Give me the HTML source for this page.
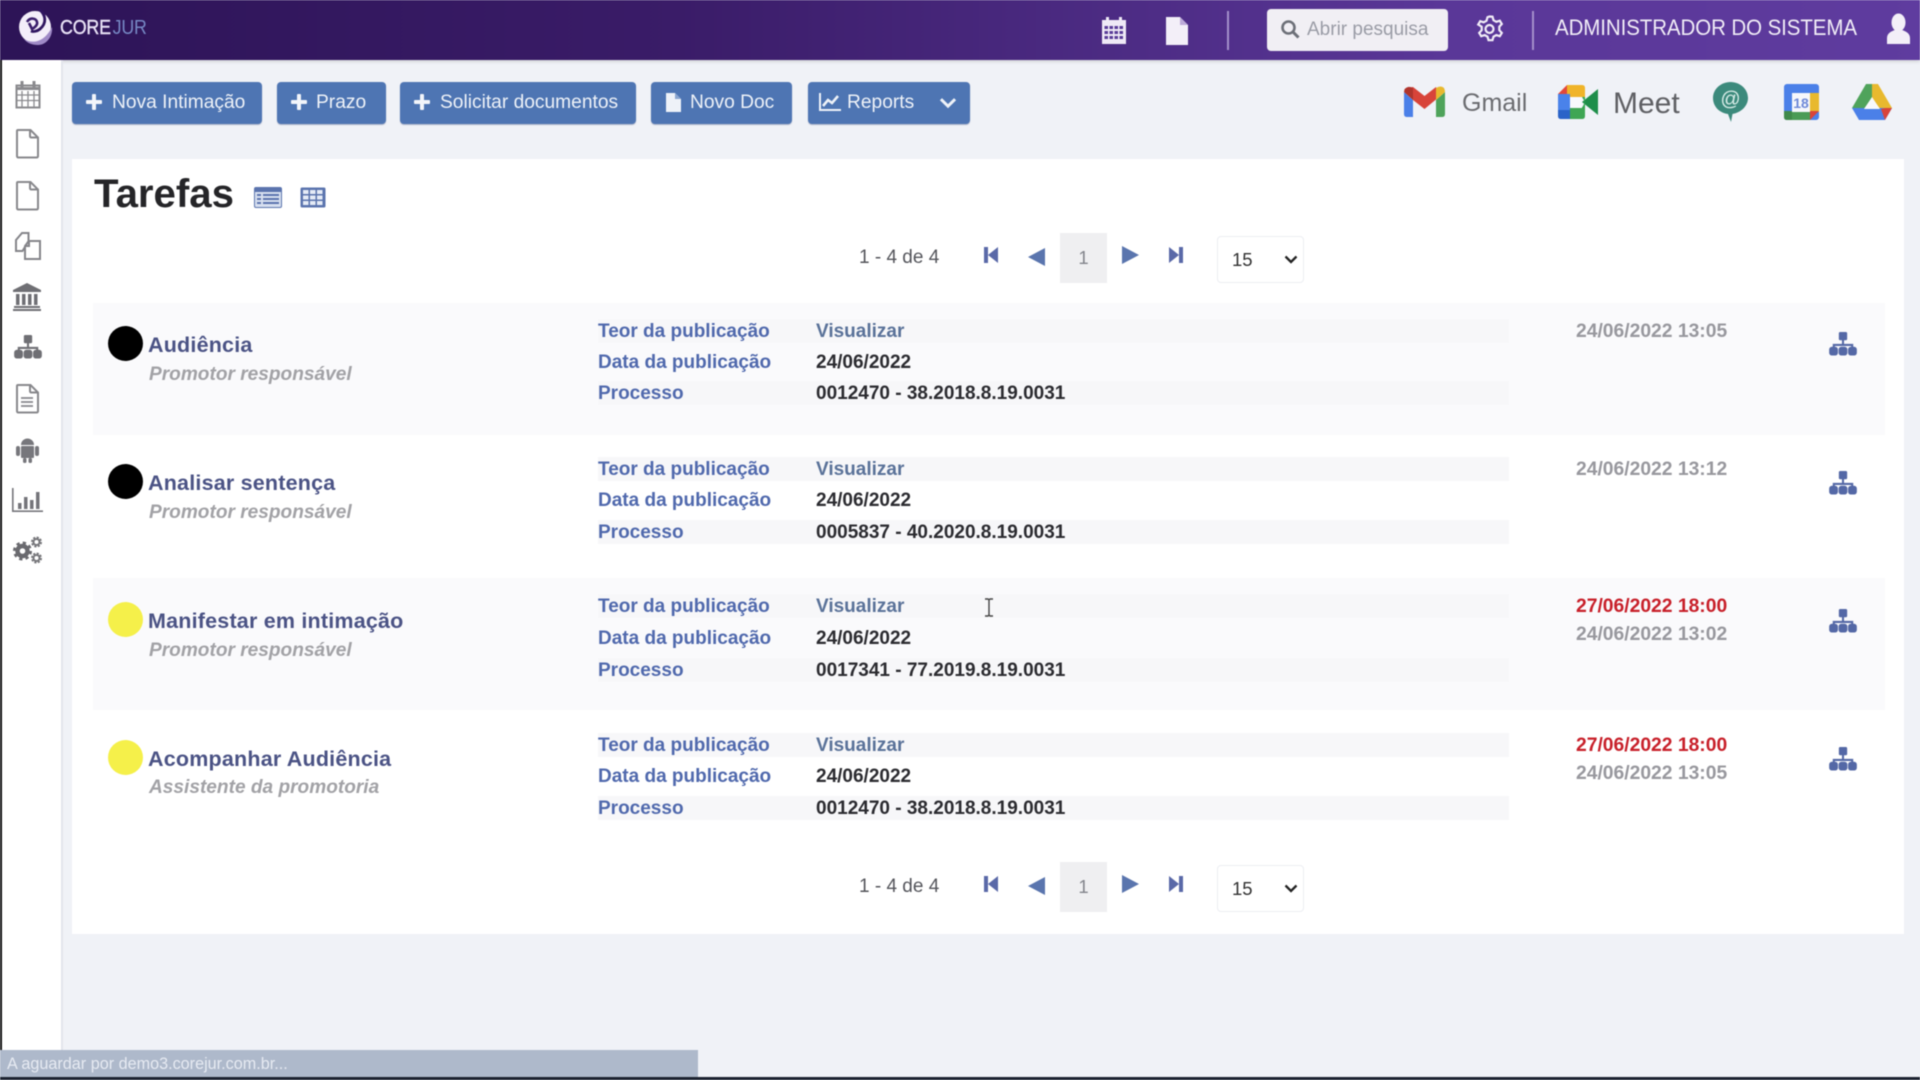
<!DOCTYPE html>
<html lang="pt"><head><meta charset="utf-8"><title>Tarefas</title>
<style>
*{box-sizing:border-box}
html,body{margin:0;padding:0;width:1920px;height:1080px;overflow:hidden}
body{background:#f0f2f7;font-family:"Liberation Sans",sans-serif;position:relative}
#w{position:absolute;left:0;top:0;width:1920px;height:1080px;filter:blur(.55px)}
.a{position:absolute;white-space:nowrap}
.hd{left:0;top:0;width:1920px;height:60px;background:linear-gradient(90deg,#2d1457 0%,#3a1c68 35%,#5a3798 75%,#5f3c9f 100%);box-shadow:0 1px 4px rgba(0,0,0,.18)}
.side{left:0;top:60px;width:63px;height:1017px;background:#fff;border-left:2px solid #111;border-right:2px solid #e3e5ec}
.btn{top:82px;height:42px;background:#4e75b3;border-radius:4px;color:#eef2f8;font-size:19.2px;line-height:42px;box-shadow:0 1px 1px rgba(40,60,110,.35)}
.btn span{position:absolute;top:0}
.plus{position:absolute;top:12px;width:16px;height:16px}
.plus:before,.plus:after{content:"";position:absolute;background:#f2f5fa;border-radius:1px}
.plus:before{left:6px;top:0;width:4px;height:16px}
.plus:after{left:0;top:6px;width:16px;height:4px}
.card{left:72px;top:159px;width:1832px;height:775px;background:#fff}
.row{left:93px;width:1792px;height:132px;background:#fafafc}
.st{left:598px;width:911px;height:24px;background:#f7f7f9}
.dot{left:108px;width:35px;height:35px;border-radius:50%}
.ti{left:148px;font-size:21.5px;font-weight:bold;color:#4b5385;line-height:26px;letter-spacing:.2px}
.su{left:149px;font-size:19.1px;font-weight:bold;font-style:italic;color:#a2a2a6;line-height:24px}
.l{left:598px;font-size:19px;font-weight:bold;color:#5069ad;line-height:24px;margin-top:2px}
.v{left:816px;font-size:19px;font-weight:bold;color:#2b2b30;line-height:24px;margin-top:2px}
.vl{color:#5a7299}
.d{left:1576px;font-size:19.3px;font-weight:bold;color:#98989e;line-height:24px;margin-top:2px}
.r{color:#c8202a}
.pg{font-size:19px;color:#55565c;line-height:24px;margin-top:1px}
.sel{width:87px;height:47px;background:#fff;border:1px solid #eceef2;border-radius:4px;font-size:18.5px;color:#333;line-height:46px;padding-left:14px}
.box{width:47px;height:50px;background:#efeff1;color:#83858c;font-size:18.5px;text-align:center;line-height:49px}
svg{position:absolute;overflow:visible}
</style></head><body>
<svg width="0" height="0" style="position:absolute">
<defs>
<symbol id="cal" viewBox="0 0 26 30"><path d="M1 5h4V2h3v3h10V2h3v3h4v24H1z" fill="currentColor"/><g fill="#5a3d98"><rect x="3.500" y="11" width="3.500" height="3"/><rect x="8.500" y="11" width="3.500" height="3"/><rect x="13.500" y="11" width="3.500" height="3"/><rect x="18.500" y="11" width="3.500" height="3"/><rect x="3.500" y="16" width="3.500" height="3"/><rect x="8.500" y="16" width="3.500" height="3"/><rect x="13.500" y="16" width="3.500" height="3"/><rect x="18.500" y="16" width="3.500" height="3"/><rect x="3.500" y="21" width="3.500" height="3"/><rect x="8.500" y="21" width="3.500" height="3"/><rect x="13.500" y="21" width="3.500" height="3"/><rect x="18.500" y="21" width="3.500" height="3"/></g></symbol>
<symbol id="doc" viewBox="0 0 24 30"><path d="M2 2q0-1 1-1h12.500L23 8.500V27q0 1.500-1.500 1.500h-18Q2 28.500 2 27z" fill="none" stroke="currentColor" stroke-width="2"/><path d="M15 1.500V7q0 1.500 1.500 1.500H22.500" fill="none" stroke="currentColor" stroke-width="2"/></symbol>
<symbol id="org" viewBox="0 0 30 26"><rect x="10.500" y="0" width="9" height="9" rx="1.500" fill="currentColor"/><path d="M15 8v7M5 18v-4h20v4" fill="none" stroke="currentColor" stroke-width="2.200"/><rect x="0" y="16" width="9.500" height="9.500" rx="3" fill="currentColor"/><rect x="10.250" y="16" width="9.500" height="9.500" rx="3" fill="currentColor"/><rect x="20.500" y="16" width="9.500" height="9.500" rx="3" fill="currentColor"/></symbol>
<symbol id="first" viewBox="0 0 16 18"><rect x="1" y="1" width="4" height="16" fill="currentColor"/><path d="M15 1v16L5 9z" fill="currentColor"/></symbol>
<symbol id="last" viewBox="0 0 16 18"><rect x="11" y="1" width="4" height="16" fill="currentColor"/><path d="M1 1v16l10-8z" fill="currentColor"/></symbol>
<symbol id="prev" viewBox="0 0 18 18"><path d="M17 0v18L0 9z" fill="currentColor"/></symbol>
<symbol id="next" viewBox="0 0 18 18"><path d="M1 0v18l17-9z" fill="currentColor"/></symbol>
<symbol id="chev" viewBox="0 0 14 9"><path d="M1.500 1.500L7 7l5.500-5.500" fill="none" stroke="currentColor" stroke-width="2.300"/></symbol>
</defs></svg>
<div id="w">
<div class="a hd"></div>
<!-- logo -->
<svg style="left:18px;top:9px" width="36" height="36" viewBox="0 0 36 36"><circle cx="17" cy="18" r="16" fill="#f3eef9"/><path d="M9 13c3-5 9-4 10 0 1 3-3 6-5 7l-3-6" fill="none" stroke="#3a1e6b" stroke-width="2.600"/><path d="M21 0c7 6 8 14 1 20-3 2.500-7 3-9 2" fill="none" stroke="#2f1560" stroke-width="2.800"/><path d="M6 30c8 5 20 4 28-12 1 10-6 18-14 18-6 0-11-2-14-6z" fill="#9f8ac6"/></svg>
<div class="a" style="left:60px;top:13px;color:#e8e1f5;font-size:20.5px;line-height:30px;transform:scaleX(.87);transform-origin:0 0;font-weight:bold;letter-spacing:-.2px"><span style="font-weight:normal;-webkit-text-stroke:.4px #e8e1f5">CORE</span><span style="font-weight:normal;color:#7688c4;margin-left:2px">JUR</span></div>
<!-- header right -->
<svg style="left:1101px;top:15px;color:#efe9f6" width="26" height="30"><use href="#cal"/></svg>
<svg style="left:1165px;top:16px" width="24" height="30" viewBox="0 0 24 30"><path d="M1 1h14l8 8v20H1z" fill="#f3eff8"/><path d="M15 1v8h8" fill="#bcaad8"/></svg>
<div class="a" style="left:1227px;top:11px;width:2px;height:39px;background:#a48fca"></div>
<div class="a" style="left:1267px;top:9px;width:181px;height:42px;background:#f1eff4;border-radius:4px"></div>
<svg style="left:1280px;top:19px" width="20" height="20" viewBox="0 0 20 20"><circle cx="8.500" cy="8.500" r="6" fill="none" stroke="#6d7078" stroke-width="2.600"/><path d="M13 13l5.500 5.500" stroke="#6d7078" stroke-width="3"/></svg>
<div class="a" style="left:1307px;top:18px;font-size:19px;line-height:24px;color:#9a9ca6">Abrir pesquisa</div>
<svg style="left:1475px;top:14px" width="29" height="30" viewBox="0 0 29 30"><path d="M14.500 2.500l3 .2 1 3.600 2.800 1.500 3.500-1.100 2 3.300-2.500 2.700v3.500l2.500 2.700-2 3.300-3.500-1.100-2.800 1.500-1 3.600h-4l-1-3.600-2.800-1.500-3.500 1.100-2-3.300 2.500-2.700v-3.500L3.200 10.500l2-3.300 3.500 1.100 2.800-1.500 1-3.600z" fill="none" stroke="#f1ecf7" stroke-width="2.200"/><circle cx="14.500" cy="15" r="4" fill="none" stroke="#f1ecf7" stroke-width="2.200"/></svg>
<div class="a" style="left:1532px;top:11px;width:2px;height:39px;background:#a48fca"></div>
<div class="a" style="left:1555px;top:14px;font-size:22px;line-height:28px;color:#f1edf7;letter-spacing:-.1px;transform:scaleX(.932);transform-origin:0 0">ADMINISTRADOR DO SISTEMA</div>
<svg style="left:1886px;top:13px" width="25" height="31" viewBox="0 0 25 31"><ellipse cx="12.500" cy="9.500" rx="7" ry="9" fill="#f3eff8"/><path d="M1 31v-6c0-5 5-7 8-8h7c3 1 8 3 8 8v6z" fill="#f3eff8"/></svg>
<!-- sidebar -->
<div class="a side"></div>
<svg style="left:15px;top:79px" width="26" height="30" viewBox="0 0 26 30" fill="none" stroke="#8a8a8e"><path d="M1.500 6.500h23v22h-23z" stroke-width="2"/><path d="M1.500 9.500h23" stroke-width="3"/><path d="M1.500 16h23M1.500 21.500h23M7 12v16M13 12v16M19 12v16" stroke-width="1.300"/><path d="M7 2v6M19 2v6" stroke-width="3"/></svg>
<svg style="left:15px;top:129px;color:#88888c" width="24" height="30"><use href="#doc"/></svg>
<svg style="left:15px;top:181px;color:#88888c" width="24" height="30"><use href="#doc"/></svg>
<svg style="left:14px;top:231px" width="28" height="30" viewBox="0 0 28 30" fill="none" stroke="#85858a" stroke-width="2"><path d="M2 9l6-7h6.500v8l-6 10H2z"/><path d="M15 10h11v18H11V15z" fill="#fff"/><path d="M15 10v5h-4"/></svg>
<svg style="left:12px;top:283px" width="30" height="28" viewBox="0 0 30 28" fill="#6f6f74"><path d="M15 0l14 7v2H1V7z"/><rect x="4" y="11" width="3.500" height="11"/><rect x="10" y="11" width="3.500" height="11"/><rect x="16" y="11" width="3.500" height="11"/><rect x="22" y="11" width="3.500" height="11"/><rect x="2" y="23" width="26" height="2"/><rect x="1" y="26" width="28" height="2"/></svg>
<svg style="left:14px;top:335px;color:#6f6f74" width="28" height="24"><use href="#org"/></svg>
<svg style="left:15px;top:384px;color:#88888c" width="24" height="30"><use href="#doc"/></svg>
<svg style="left:20px;top:397px" width="14" height="10" viewBox="0 0 14 10"><path d="M1 1h12M1 5h12M1 9h12" stroke="#88888c" stroke-width="1.800"/></svg>
<svg style="left:16px;top:437px" width="23" height="26" viewBox="0 0 23 26" fill="#77777c"><path d="M5 8a6.500 6.500 0 0 1 13 0z"/><rect x="5" y="9" width="13" height="12" rx="1"/><rect x="0" y="9" width="4" height="10" rx="2"/><rect x="19" y="9" width="4" height="10" rx="2"/><rect x="7" y="21" width="3.500" height="5" rx="1.500"/><rect x="12.500" y="21" width="3.500" height="5" rx="1.500"/></svg>
<svg style="left:12px;top:488px" width="31" height="24" viewBox="0 0 31 24" fill="#75757a"><rect x="0" y="0" width="1.600" height="24"/><rect x="0" y="22.400" width="31" height="1.600"/><rect x="6" y="15" width="3.500" height="6"/><rect x="12" y="9" width="3.500" height="12"/><rect x="18" y="12" width="3.500" height="9"/><rect x="24" y="4" width="3.500" height="17"/></svg>
<svg style="left:13px;top:537px" width="29" height="27" viewBox="0 0 29 27" fill="none"><circle cx="9.500" cy="14" r="5" stroke="#6a6a6f" stroke-width="4.400"/><circle cx="9.500" cy="14" r="8" stroke="#6a6a6f" stroke-width="3" stroke-dasharray="3.200 3.080"/><circle cx="23.500" cy="5" r="3" stroke="#78787c" stroke-width="2"/><circle cx="23.500" cy="5" r="4.500" stroke="#78787c" stroke-width="2" stroke-dasharray="2.200 1.330"/><circle cx="23.500" cy="21" r="3" stroke="#78787c" stroke-width="2"/><circle cx="23.500" cy="21" r="4.500" stroke="#78787c" stroke-width="2" stroke-dasharray="2.200 1.330"/></svg>
<!-- toolbar -->
<div class="a btn" style="left:72px;width:190px"><i class="plus" style="left:14px"></i><span style="left:40px">Nova Intimação</span></div>
<div class="a btn" style="left:277px;width:109px"><i class="plus" style="left:14px"></i><span style="left:39px">Prazo</span></div>
<div class="a btn" style="left:400px;width:236px"><i class="plus" style="left:14px"></i><span style="left:40px">Solicitar documentos</span></div>
<div class="a btn" style="left:651px;width:141px"><svg style="left:14px;top:11px" width="17" height="19" viewBox="0 0 17 19"><path d="M1 0h9l6 6v13H1z" fill="#eef2f8"/><path d="M10 0v6h6" fill="#8aa5d0"/></svg><span style="left:39px">Novo Doc</span></div>
<div class="a btn" style="left:808px;width:162px"><svg style="left:11px;top:11px" width="22" height="18" viewBox="0 0 22 18"><path d="M1 0v17h21" fill="none" stroke="#eef2f8" stroke-width="2"/><path d="M4 13l5-6 4 3 6-7" fill="none" stroke="#eef2f8" stroke-width="2.600"/></svg><span style="left:39px">Reports</span><svg style="left:131px;top:15px;color:#eef2f8" width="18" height="12"><use href="#chev"/></svg></div>
<!-- google apps -->
<svg style="left:1404px;top:87px" width="41" height="30" viewBox="0 0 41 30"><path d="M0 5v22q0 3 3 3h6V13z" fill="#4b80e8"/><path d="M32 13v17h6q3 0 3-3V5z" fill="#4fa35b"/><path d="M3 1L9 0l11.500 9L32 0l3 10-14.500 12L9 13z" fill="#d8443a"/><path d="M32 1q5-3 8 0 1 2 1 4l-9 8z" fill="#e8b92e"/><path d="M0 5q0-4 4-5 2-.5 5 1v12z" fill="#b0352d"/></svg>
<div class="a" style="left:1462px;top:87px;font-size:25px;line-height:32px;color:#6b6c70">Gmail</div>
<svg style="left:1558px;top:85px" width="40" height="34" viewBox="0 0 40 34"><path d="M9 0h15q3 0 3 3v9H12V9H9z" fill="#f0b429"/><path d="M0 9L9 0v9z" fill="#e2483b"/><path d="M0 9h12v16H0z" fill="#4a82ea"/><path d="M0 25h12v9H3q-3 0-3-3z" fill="#2a63c8"/><path d="M12 22h15v9q0 3-3 3H12z" fill="#3fa654"/><rect x="12" y="12" width="12" height="11" fill="#f8f9fc"/><path d="M24 17L40 4v26L24 17z" fill="#1e8e4a"/><path d="M24 12h3v5z M24 23h3v-6z" fill="#34a853"/></svg>
<div class="a" style="left:1613px;top:86px;font-size:30px;line-height:36px;color:#5f6064;letter-spacing:0">Meet</div>
<svg style="left:1713px;top:82px" width="35" height="40" viewBox="0 0 35 40"><path d="M17.500 0C8 0 0 7 0 16c0 8.500 6.500 15 15 16l3 8 1.500-8C28 30.500 35 24 35 16 35 7 27 0 17.500 0z" fill="#3c8a7c"/><text x="17.500" y="23.500" font-size="20" font-family="Liberation Sans" fill="#d7ece7" text-anchor="middle">@</text></svg>
<svg style="left:1784px;top:84px" width="35" height="36" viewBox="0 0 35 36"><rect x="0" y="0" width="35" height="36" rx="3" fill="#4b80e8"/><rect x="26" y="9" width="9" height="19" fill="#e8b92e"/><path d="M8 27h18v9H8z" fill="#4a9b55"/><path d="M0 27h8v9H3q-3 0-3-3z" fill="#3f8a4a"/><path d="M26 27h9l-9 9z" fill="#d8443a"/><rect x="8" y="9" width="18" height="19" fill="#f6f7fb"/><text x="17" y="24" font-size="14" font-weight="bold" font-family="Liberation Sans" fill="#6f8ad8" text-anchor="middle">18</text></svg>
<svg style="left:1852px;top:84px" width="40" height="36" viewBox="0 0 40 36"><path d="M20 0h6l14 24-12 1-8-11z" fill="#e8b92e"/><path d="M14 0h6v14l-8 11-12-1z" fill="#4fa35b"/><path d="M0 24h40l-7 12H7z" fill="#4b80e8"/><path d="M40 24h-7l-4 1 4 11z" fill="#d8443a"/><path d="M20 13l8 12H12z" fill="#f8f9fc"/></svg>
<!-- card -->
<div class="a card"></div>
<div class="a" style="left:94px;top:169px;font-size:40.2px;font-weight:bold;line-height:50px;color:#252528">Tarefas</div>
<svg style="left:254px;top:187px" width="28" height="21" viewBox="0 0 28 21"><rect x=".5" y=".5" width="27" height="20" rx="1.500" fill="#d8e0f0" stroke="#5b74ae"/><rect x="1" y="1" width="26" height="4" fill="#5b74ae"/><path d="M3 8h4M3 12h4M3 16h4M9 8h16M9 12h16M9 16h16" stroke="#5b74ae" stroke-width="2"/></svg>
<svg style="left:300px;top:187px" width="26" height="21" viewBox="0 0 26 21"><rect x=".5" y=".5" width="25" height="20" rx="1.500" fill="#5b74ae"/><g fill="#e5ebf6"><rect x="3" y="3" width="5.500" height="4"/><rect x="10" y="3" width="5.500" height="4"/><rect x="17" y="3" width="5.500" height="4"/><rect x="3" y="8.500" width="5.500" height="4"/><rect x="10" y="8.500" width="5.500" height="4"/><rect x="17" y="8.500" width="5.500" height="4"/><rect x="3" y="14" width="5.500" height="4"/><rect x="10" y="14" width="5.500" height="4"/><rect x="17" y="14" width="5.500" height="4"/></g></svg>
<!-- top pagination -->
<div class="a pg" style="left:859px;top:245px">1 - 4 de 4</div>
<svg style="left:983px;top:246px;color:#5a69a8" width="16" height="18"><use href="#first"/></svg>
<svg style="left:1028px;top:248px;color:#5a75ae" width="18" height="18"><use href="#prev"/></svg>
<div class="a box" style="left:1060px;top:233px">1</div>
<svg style="left:1121px;top:246px;color:#5a75ae" width="18" height="18"><use href="#next"/></svg>
<svg style="left:1168px;top:246px;color:#5a69a8" width="16" height="18"><use href="#last"/></svg>
<div class="a sel" style="left:1217px;top:236px">15</div>
<svg style="left:1284px;top:255px;color:#222" width="14" height="9"><use href="#chev"/></svg>
<!-- rows -->
<div class="a row" style="top:303px"></div>
<div class="a row" style="top:578px"></div>
<div class="a st" style="top:319px"></div><div class="a st" style="top:381px"></div>
<div class="a st" style="top:457px"></div><div class="a st" style="top:520px"></div>
<div class="a st" style="top:594px"></div><div class="a st" style="top:658px"></div>
<div class="a st" style="top:733px"></div><div class="a st" style="top:796px"></div>

<div class="a dot" style="top:326px;background:#000"></div>
<div class="a ti" style="top:332px">Audiência</div><div class="a su" style="top:363px">Promotor responsável</div>
<div class="a l" style="top:318px">Teor da publicação</div><div class="a v vl" style="top:318px">Visualizar</div>
<div class="a l" style="top:349px">Data da publicação</div><div class="a v" style="top:349px">24/06/2022</div>
<div class="a l" style="top:380px">Processo</div><div class="a v" style="top:380px">0012470 - 38.2018.8.19.0031</div>
<div class="a d" style="top:318px">24/06/2022 13:05</div>
<svg style="left:1829px;top:332px;color:#5468a6" width="28" height="24"><use href="#org"/></svg>

<div class="a dot" style="top:464px;background:#000"></div>
<div class="a ti" style="top:470px">Analisar sentença</div><div class="a su" style="top:501px">Promotor responsável</div>
<div class="a l" style="top:456px">Teor da publicação</div><div class="a v vl" style="top:456px">Visualizar</div>
<div class="a l" style="top:487px">Data da publicação</div><div class="a v" style="top:487px">24/06/2022</div>
<div class="a l" style="top:519px">Processo</div><div class="a v" style="top:519px">0005837 - 40.2020.8.19.0031</div>
<div class="a d" style="top:456px">24/06/2022 13:12</div>
<svg style="left:1829px;top:471px;color:#5468a6" width="28" height="24"><use href="#org"/></svg>

<div class="a dot" style="top:602px;background:#f5f04a"></div>
<div class="a ti" style="top:608px">Manifestar em intimação</div><div class="a su" style="top:639px">Promotor responsável</div>
<div class="a l" style="top:593px">Teor da publicação</div><div class="a v vl" style="top:593px">Visualizar</div>
<div class="a l" style="top:625px">Data da publicação</div><div class="a v" style="top:625px">24/06/2022</div>
<div class="a l" style="top:657px">Processo</div><div class="a v" style="top:657px">0017341 - 77.2019.8.19.0031</div>
<div class="a d r" style="top:593px">27/06/2022 18:00</div><div class="a d" style="top:621px">24/06/2022 13:02</div>
<svg style="left:1829px;top:609px;color:#5468a6" width="28" height="24"><use href="#org"/></svg>

<div class="a dot" style="top:740px;background:#f5f04a"></div>
<div class="a ti" style="top:746px">Acompanhar Audiência</div><div class="a su" style="top:776px">Assistente da promotoria</div>
<div class="a l" style="top:732px">Teor da publicação</div><div class="a v vl" style="top:732px">Visualizar</div>
<div class="a l" style="top:763px">Data da publicação</div><div class="a v" style="top:763px">24/06/2022</div>
<div class="a l" style="top:795px">Processo</div><div class="a v" style="top:795px">0012470 - 38.2018.8.19.0031</div>
<div class="a d r" style="top:732px">27/06/2022 18:00</div><div class="a d" style="top:760px">24/06/2022 13:05</div>
<svg style="left:1829px;top:747px;color:#5468a6" width="28" height="24"><use href="#org"/></svg>

<!-- cursor -->
<svg style="left:984px;top:598px" width="10" height="19" viewBox="0 0 10 19"><path d="M1 1h3l1 1 1-1h3M5 2v15M1 18h3l1-1 1 1h3" fill="none" stroke="#444" stroke-width="1.400"/></svg>
<!-- bottom pagination -->
<div class="a pg" style="left:859px;top:874px">1 - 4 de 4</div>
<svg style="left:983px;top:875px;color:#5a69a8" width="16" height="18"><use href="#first"/></svg>
<svg style="left:1028px;top:877px;color:#5a75ae" width="18" height="18"><use href="#prev"/></svg>
<div class="a box" style="left:1060px;top:862px">1</div>
<svg style="left:1121px;top:875px;color:#5a75ae" width="18" height="18"><use href="#next"/></svg>
<svg style="left:1168px;top:875px;color:#5a69a8" width="16" height="18"><use href="#last"/></svg>
<div class="a sel" style="left:1217px;top:865px">15</div>
<svg style="left:1284px;top:884px;color:#222" width="14" height="9"><use href="#chev"/></svg>
<!-- status bar -->
<div class="a" style="left:0;top:1050px;width:698px;height:27px;background:#aeb9cb;color:#e6eaf2;font-size:16.200px;line-height:29px;padding-left:7px">A aguardar por demo3.corejur.com.br...</div>
<div class="a" style="left:0;top:1077px;width:1920px;height:3px;background:#1c2230"></div>
</div>
</body></html>
